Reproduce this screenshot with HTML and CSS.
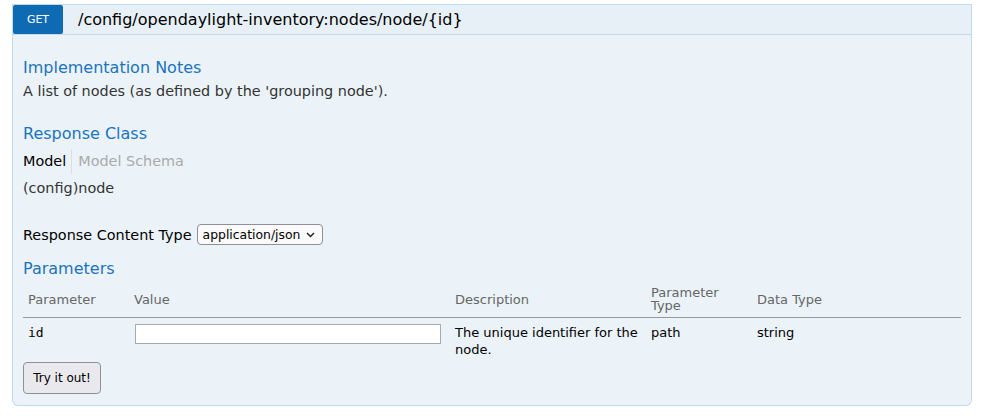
FILE: index.html
```html
<!DOCTYPE html>
<html>
<head>
<meta charset="utf-8">
<link rel="stylesheet" href="styles.css">
</head>
<body>
<div class="page">
  <div class="operation">
    <div class="heading">
      <span class="verb">GET</span>
      <span class="path">/config/opendaylight-inventory:nodes/node/{id}</span>
    </div>
    <div class="content">
      <h4 class="h-notes">Implementation Notes</h4>
      <p class="notes">A list of nodes (as defined by the 'grouping node').</p>
      <h4 class="h-class">Response Class</h4>
      <ul class="tabs">
        <li class="tab active">Model</li>
        <li class="tab">Model Schema</li>
      </ul>
      <div class="model">(config)node</div>
      <div class="ctype">
        <label>Response Content Type</label>
        <span class="selwrap">
          <select class="sel"><option>application/json</option></select>
          <svg class="chev" width="9" height="6" viewBox="0 0 9 6"><path d="M1 1 L4.5 4.5 L8 1" fill="none" stroke="#222" stroke-width="1.5"/></svg>
        </span>
      </div>
      <h4 class="h-params">Parameters</h4>
      <table class="params">
        <colgroup>
          <col class="c1"><col class="c2"><col class="c3"><col class="c4"><col class="c5">
        </colgroup>
        <thead>
          <tr>
            <th>Parameter</th>
            <th>Value</th>
            <th>Description</th>
            <th class="two">Parameter<br>Type</th>
            <th>Data Type</th>
          </tr>
        </thead>
        <tbody>
          <tr>
            <td class="code">id</td>
            <td><input class="val" type="text"></td>
            <td>The unique identifier for the node.</td>
            <td>path</td>
            <td>string</td>
          </tr>
        </tbody>
      </table>
      <button class="try">Try it out!</button>
    </div>
  </div>
</div>
</body>
</html>
```

FILE: styles.css
```css
html, body {
  margin: 0;
  padding: 0;
  background: #ffffff;
}
body {
  font-family: "DejaVu Sans", sans-serif;
  color: #333;
}
.page {
  padding: 4px 25px 0 12px;
}
.operation {
  width: 960px;
}
.heading {
  display: flex;
  align-items: center;
  height: 29px;
  background: #e7f0f7;
  border: 1px solid #c3d9ec;
}
.verb {
  width: 50px;
  height: 29px;
  background: #0f6ab4;
  color: #fff;
  font-size: 11px;
  display: flex;
  align-items: center;
  justify-content: center;
  border-radius: 2px;
}
.path {
  margin-left: 15px;
  font-size: 16px;
  color: #000;
  line-height: 20px;
}
.content {
  background: #ebf3f9;
  border: 1px solid #c3d9ec;
  border-top: none;
  border-radius: 0 0 6px 6px;
  padding: 0 10px 11px 10px;
}
h4 {
  margin: 0;
  font-size: 16px;
  font-weight: normal;
  line-height: 20px;
  color: #1b74bd;
}
.h-notes { padding-top: 23px; }
.notes {
  margin: 4px 0 0;
  font-size: 14.4px;
  line-height: 18px;
}
.h-class { margin-top: 24px; }
.tabs {
  list-style: none;
  margin: 5px 0 0;
  padding: 0;
  display: flex;
  font-size: 14.4px;
  line-height: 17px;
}
.tab {
  padding: 4px 0;
  color: #aaa;
}
.tab.active {
  color: #000;
  padding-right: 5px;
  border-right: 1px solid #ddd;
  margin-right: 6px;
}
.model {
  margin-top: 5px;
  font-size: 14.4px;
  line-height: 18px;
}
.ctype {
  margin-top: 27px;
  display: flex;
  align-items: center;
  font-size: 14.4px;
  color: #000;
  height: 21px;
}
.selwrap {
  position: relative;
  display: block;
  margin-left: 5px;
  height: 21px;
}
.sel {
  appearance: none;
  -webkit-appearance: none;
  display: block;
  height: 21px;
  width: 126px;
  box-sizing: border-box;
  padding: 0 0 0 5px;
  font-family: "DejaVu Sans", sans-serif;
  font-size: 12.4px;
  color: #000;
  background: #fafafa;
  border: 1px solid #8f8f9d;
  border-radius: 4px;
}
.chev {
  position: absolute;
  right: 8px;
  top: 8px;
  pointer-events: none;
}
.h-params { margin-top: 14px; }
.params {
  width: 100%;
  margin-top: 2px;
  border-collapse: collapse;
  table-layout: fixed;
}
.c1 { width: 106px; }
.c2 { width: 321px; }
.c3 { width: 196px; }
.c4 { width: 106px; }
.params th {
  text-align: left;
  font-weight: normal;
  font-size: 13px;
  line-height: 13px;
  color: #666;
  padding: 5px 5px;
  border-bottom: 1px solid #999;
  height: 26px;
  vertical-align: middle;
}
.params td {
  font-size: 13px;
  line-height: 17px;
  color: #000;
  padding: 6px 5px 1px;
  vertical-align: top;
}
.params td.code {
  font-family: "DejaVu Sans Mono", monospace;
  font-size: 13px;
}
.val {
  display: block;
  margin: 0 0 0 1px;
  width: 306px;
  height: 20px;
  box-sizing: border-box;
  border: 1px solid #aaa;
  background: #fff;
  padding: 0 2px;
}
.try {
  display: block;
  margin-top: 3px;
  width: 78px;
  height: 32px;
  font-family: "DejaVu Sans", sans-serif;
  font-size: 12px;
  color: #000;
  background: #e9e9ed;
  border: 1px solid #8f8f9d;
  border-radius: 4px;
  padding: 0;
}
```
